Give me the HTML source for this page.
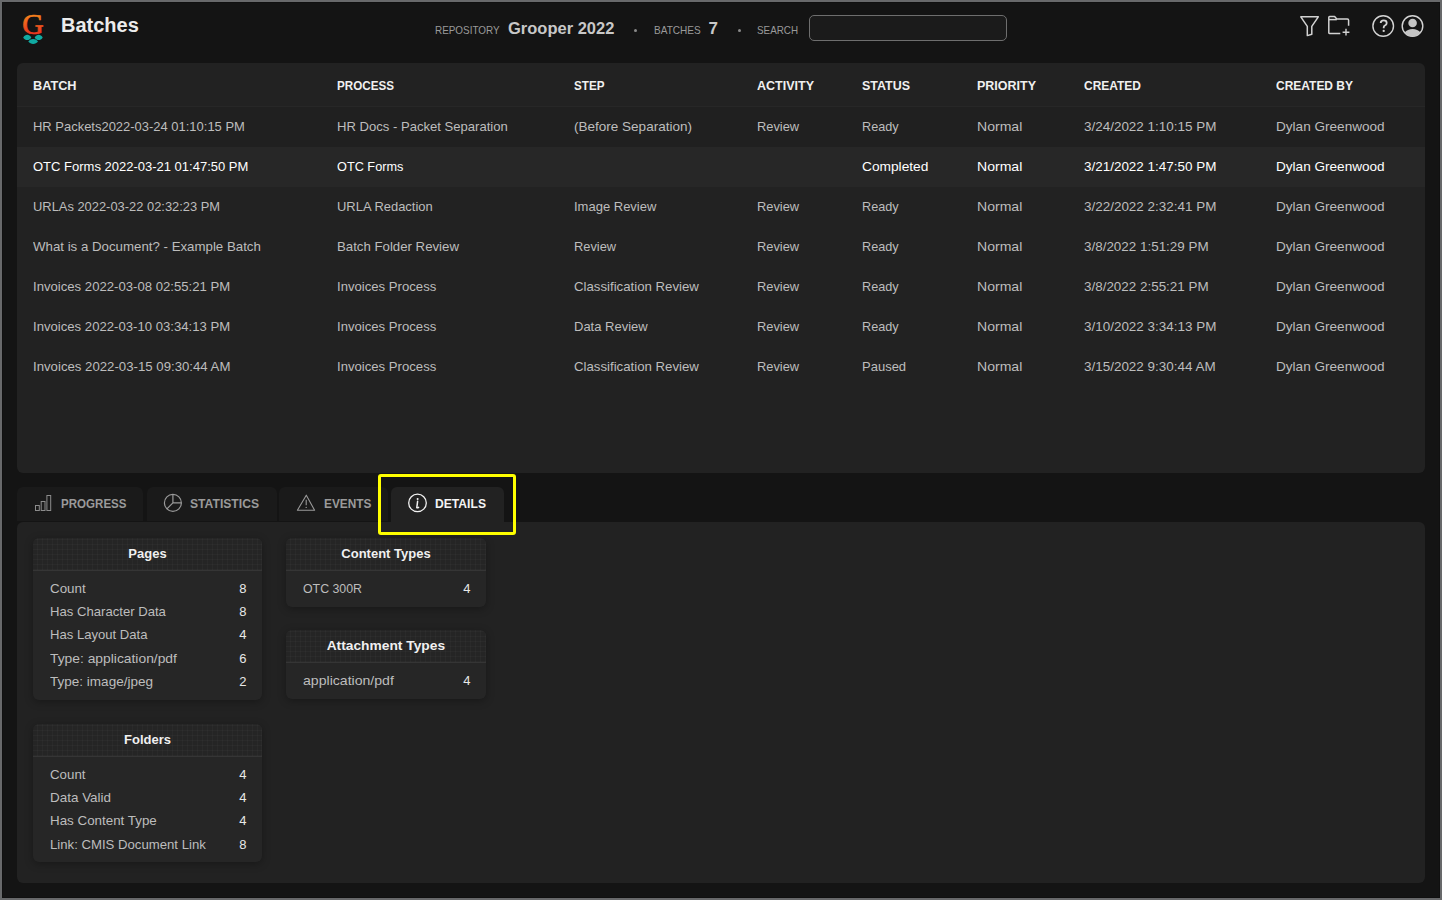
<!DOCTYPE html><html><head><meta charset="utf-8"><style>*{box-sizing:border-box;margin:0;padding:0}
html,body{width:1442px;height:900px;overflow:hidden;background:#141414;font-family:"Liberation Sans",sans-serif}
#frame{position:absolute;left:0;top:0;width:1442px;height:900px;border:2px solid #68696b;background:#141414;box-shadow:inset 0 0 0 1px #101010}
.abs{position:absolute;white-space:nowrap}
#title{left:61px;top:13.8px;font-size:19.5px;line-height:22px;font-weight:bold;color:#ececec;transform:scaleX(1.025);transform-origin:0 0}
.lbl{font-size:11px;line-height:13px;color:#9a9a9a;top:24px}
.val{font-size:17px;line-height:20px;font-weight:bold;color:#c8c8c8;top:18.6px}
.dot{width:3px;height:3px;border-radius:50%;background:#8a8a8a;top:29px}
#search{left:809px;top:15px;width:198px;height:26px;border:1px solid #6e6e6e;border-radius:5px;background:#1b1b1b}
#panel{left:17px;top:63px;width:1408px;height:410px;background:#222222;border-radius:6px}
.th{font-size:13px;line-height:15px;font-weight:bold;color:#f0f0f0;top:78px}
.hline{left:17px;top:106px;width:1408px;height:1px;background:#272727}
.row{left:17px;width:1408px;height:40px}
.r1{background:#202020}
.sel{background:#272727}
.td{font-size:13px;line-height:15px;color:#bdbdbd}
.tds{color:#ffffff}
.tab{top:487px;height:35px;background:#1a1a1a;border-radius:6px 6px 0 0}
.tabt{font-size:13px;line-height:15px;font-weight:bold;color:#9a9a9a;top:496px}
#lower{left:17px;top:522px;width:1408px;height:361px;background:#222222;border-radius:6px}
.card{position:absolute;background:#262626;border-radius:6px;box-shadow:0 2px 8px rgba(0,0,0,.3)}
.chead{position:absolute;left:0;top:0;width:100%;height:33px;border-radius:6px 6px 0 0;border-bottom:1px solid #353535;
 background-color:#252525;background-position:-1px 0;
 background-image:repeating-linear-gradient(90deg,rgba(255,255,255,.025) 0 1px,transparent 1px 5px),repeating-linear-gradient(0deg,rgba(255,255,255,.025) 0 1px,transparent 1px 5px);
 text-align:center;font-size:13px;font-weight:bold;color:#f0f0f0;line-height:32px}
.ci{position:absolute;font-size:13px;line-height:15px;color:#bdbdbd;white-space:nowrap}
.cv{position:absolute;font-size:13px;line-height:15px;color:#e8e8e8;text-align:right;white-space:nowrap}
#yel{left:378px;top:474px;width:138px;height:61px;border:3px solid #ffff00;border-radius:3px}
.act{background:#222222}
.tact{color:#f4f4f4}
</style></head><body><div id="frame"></div>
<svg class="abs" style="left:18px;top:10px" width="32" height="38" viewBox="0 0 32 38">
 <defs><linearGradient id="gg" x1="0" y1="0" x2="0" y2="1"><stop offset="0.1" stop-color="#f7951c"/><stop offset="0.95" stop-color="#e6221f"/></linearGradient></defs>
 <text x="15" y="24" text-anchor="middle" font-family="Liberation Serif" font-size="28" fill="url(#gg)" stroke="url(#gg)" stroke-width="0.7" transform="translate(-0.9,-1.8) scale(1.06,1.06)">G</text>
 <path d="M5.2 27.4C7.2 23.8 11.3 23.8 13.3 27.4C11.3 31 7.2 31 5.2 27.4Z" fill="#10aaa2"/>
 <path d="M16.7 27.4C18.7 23.8 22.7 23.8 24.7 27.4C22.7 31 18.7 31 16.7 27.4Z" fill="#10aaa2"/>
 <path d="M10.3 31.5C12.5 28.2 17.8 28.2 20 31.5C17.8 34.8 12.5 34.8 10.3 31.5Z" fill="#10aaa2"/>
</svg>
<div id="title" class="abs">Batches</div>
<div class="abs lbl" style="left:435px;transform:scaleX(0.9);transform-origin:0 0">REPOSITORY</div>
<div class="abs val" style="left:507.5px;transform:scaleX(0.97);transform-origin:0 0">Grooper 2022</div>
<div class="abs dot" style="left:633.5px"></div>
<div class="abs lbl" style="left:653.5px;transform:scaleX(0.915);transform-origin:0 0">BATCHES</div>
<div class="abs val" style="left:708.5px;transform:scaleX(1);transform-origin:0 0">7</div>
<div class="abs dot" style="left:737.5px"></div>
<div class="abs lbl" style="left:757px;transform:scaleX(0.895);transform-origin:0 0">SEARCH</div>
<div id="search" class="abs"></div>
<div id="panel" class="abs"></div><div class="abs hline"></div><div class="abs th" style="left:33px;transform:scaleX(0.9769);transform-origin:0 0;">BATCH</div><div class="abs th" style="left:337px;transform:scaleX(0.8965);transform-origin:0 0;">PROCESS</div><div class="abs th" style="left:574px;transform:scaleX(0.8979);transform-origin:0 0;">STEP</div><div class="abs th" style="left:757px;transform:scaleX(0.9624);transform-origin:0 0;">ACTIVITY</div><div class="abs th" style="left:862px;transform:scaleX(0.9585);transform-origin:0 0;">STATUS</div><div class="abs th" style="left:977px;transform:scaleX(0.9608);transform-origin:0 0;">PRIORITY</div><div class="abs th" style="left:1084px;transform:scaleX(0.9211);transform-origin:0 0;">CREATED</div><div class="abs th" style="left:1276px;transform:scaleX(0.9216);transform-origin:0 0;">CREATED BY</div><div class="abs row r1" style="top:107px"></div><div class="abs td" style="left:33px;top:119px;transform:scaleX(0.9972);transform-origin:0 0">HR Packets2022-03-24 01:10:15 PM</div><div class="abs td" style="left:337px;top:119px;transform:scaleX(1.0059);transform-origin:0 0">HR Docs - Packet Separation</div><div class="abs td" style="left:574px;top:119px;transform:scaleX(1.0398);transform-origin:0 0">(Before Separation)</div><div class="abs td" style="left:757px;top:119px;transform:scaleX(0.9884);transform-origin:0 0">Review</div><div class="abs td" style="left:862px;top:119px;transform:scaleX(0.9737);transform-origin:0 0">Ready</div><div class="abs td" style="left:977px;top:119px;transform:scaleX(1.081);transform-origin:0 0">Normal</div><div class="abs td" style="left:1084px;top:119px;transform:scaleX(1.0346);transform-origin:0 0">3/24/2022 1:10:15 PM</div><div class="abs td" style="left:1276px;top:119px;transform:scaleX(1.0442);transform-origin:0 0">Dylan Greenwood</div><div class="abs row sel" style="top:147px"></div><div class="abs td tds" style="left:33px;top:159px;transform:scaleX(1.0);transform-origin:0 0">OTC Forms 2022-03-21 01:47:50 PM</div><div class="abs td tds" style="left:337px;top:159px;transform:scaleX(0.9779);transform-origin:0 0">OTC Forms</div><div class="abs td tds" style="left:862px;top:159px;transform:scaleX(1.0556);transform-origin:0 0">Completed</div><div class="abs td tds" style="left:977px;top:159px;transform:scaleX(1.081);transform-origin:0 0">Normal</div><div class="abs td tds" style="left:1084px;top:159px;transform:scaleX(1.0346);transform-origin:0 0">3/21/2022 1:47:50 PM</div><div class="abs td tds" style="left:1276px;top:159px;transform:scaleX(1.0442);transform-origin:0 0">Dylan Greenwood</div><div class="abs row" style="top:187px"></div><div class="abs td" style="left:33px;top:199px;transform:scaleX(0.992);transform-origin:0 0">URLAs 2022-03-22 02:32:23 PM</div><div class="abs td" style="left:337px;top:199px;transform:scaleX(0.9958);transform-origin:0 0">URLA Redaction</div><div class="abs td" style="left:574px;top:199px;transform:scaleX(1.0);transform-origin:0 0">Image Review</div><div class="abs td" style="left:757px;top:199px;transform:scaleX(0.9884);transform-origin:0 0">Review</div><div class="abs td" style="left:862px;top:199px;transform:scaleX(0.9737);transform-origin:0 0">Ready</div><div class="abs td" style="left:977px;top:199px;transform:scaleX(1.081);transform-origin:0 0">Normal</div><div class="abs td" style="left:1084px;top:199px;transform:scaleX(1.0346);transform-origin:0 0">3/22/2022 2:32:41 PM</div><div class="abs td" style="left:1276px;top:199px;transform:scaleX(1.0442);transform-origin:0 0">Dylan Greenwood</div><div class="abs row" style="top:227px"></div><div class="abs td" style="left:33px;top:239px;transform:scaleX(1.0206);transform-origin:0 0">What is a Document? - Example Batch</div><div class="abs td" style="left:337px;top:239px;transform:scaleX(1.0167);transform-origin:0 0">Batch Folder Review</div><div class="abs td" style="left:574px;top:239px;transform:scaleX(0.9884);transform-origin:0 0">Review</div><div class="abs td" style="left:757px;top:239px;transform:scaleX(0.9884);transform-origin:0 0">Review</div><div class="abs td" style="left:862px;top:239px;transform:scaleX(0.9737);transform-origin:0 0">Ready</div><div class="abs td" style="left:977px;top:239px;transform:scaleX(1.081);transform-origin:0 0">Normal</div><div class="abs td" style="left:1084px;top:239px;transform:scaleX(1.0325);transform-origin:0 0">3/8/2022 1:51:29 PM</div><div class="abs td" style="left:1276px;top:239px;transform:scaleX(1.0442);transform-origin:0 0">Dylan Greenwood</div><div class="abs row" style="top:267px"></div><div class="abs td" style="left:33px;top:279px;transform:scaleX(1.0103);transform-origin:0 0">Invoices 2022-03-08 02:55:21 PM</div><div class="abs td" style="left:337px;top:279px;transform:scaleX(1.0103);transform-origin:0 0">Invoices Process</div><div class="abs td" style="left:574px;top:279px;transform:scaleX(1.0163);transform-origin:0 0">Classification Review</div><div class="abs td" style="left:757px;top:279px;transform:scaleX(0.9884);transform-origin:0 0">Review</div><div class="abs td" style="left:862px;top:279px;transform:scaleX(0.9737);transform-origin:0 0">Ready</div><div class="abs td" style="left:977px;top:279px;transform:scaleX(1.081);transform-origin:0 0">Normal</div><div class="abs td" style="left:1084px;top:279px;transform:scaleX(1.0325);transform-origin:0 0">3/8/2022 2:55:21 PM</div><div class="abs td" style="left:1276px;top:279px;transform:scaleX(1.0442);transform-origin:0 0">Dylan Greenwood</div><div class="abs row" style="top:307px"></div><div class="abs td" style="left:33px;top:319px;transform:scaleX(1.0103);transform-origin:0 0">Invoices 2022-03-10 03:34:13 PM</div><div class="abs td" style="left:337px;top:319px;transform:scaleX(1.0103);transform-origin:0 0">Invoices Process</div><div class="abs td" style="left:574px;top:319px;transform:scaleX(1.0);transform-origin:0 0">Data Review</div><div class="abs td" style="left:757px;top:319px;transform:scaleX(0.9884);transform-origin:0 0">Review</div><div class="abs td" style="left:862px;top:319px;transform:scaleX(0.9737);transform-origin:0 0">Ready</div><div class="abs td" style="left:977px;top:319px;transform:scaleX(1.081);transform-origin:0 0">Normal</div><div class="abs td" style="left:1084px;top:319px;transform:scaleX(1.0346);transform-origin:0 0">3/10/2022 3:34:13 PM</div><div class="abs td" style="left:1276px;top:319px;transform:scaleX(1.0442);transform-origin:0 0">Dylan Greenwood</div><div class="abs row" style="top:347px"></div><div class="abs td" style="left:33px;top:359px;transform:scaleX(1.0155);transform-origin:0 0">Invoices 2022-03-15 09:30:44 AM</div><div class="abs td" style="left:337px;top:359px;transform:scaleX(1.0103);transform-origin:0 0">Invoices Process</div><div class="abs td" style="left:574px;top:359px;transform:scaleX(1.0163);transform-origin:0 0">Classification Review</div><div class="abs td" style="left:757px;top:359px;transform:scaleX(0.9884);transform-origin:0 0">Review</div><div class="abs td" style="left:862px;top:359px;transform:scaleX(1.0);transform-origin:0 0">Paused</div><div class="abs td" style="left:977px;top:359px;transform:scaleX(1.081);transform-origin:0 0">Normal</div><div class="abs td" style="left:1084px;top:359px;transform:scaleX(1.0346);transform-origin:0 0">3/15/2022 9:30:44 AM</div><div class="abs td" style="left:1276px;top:359px;transform:scaleX(1.0442);transform-origin:0 0">Dylan Greenwood</div><div class="abs tab" style="left:17px;width:126px;height:34px"></div>
<div class="abs tab" style="left:147px;width:130px;height:34px"></div>
<div class="abs tab" style="left:279px;width:109px;height:34px"></div>
<div class="abs tab act" style="left:391px;width:113px"></div>
<div id="lower" class="abs"></div>
<div class="abs tabt" style="left:60.5px;transform:scaleX(0.889);transform-origin:0 0">PROGRESS</div>
<div class="abs tabt" style="left:190px;transform:scaleX(0.934);transform-origin:0 0">STATISTICS</div>
<div class="abs tabt" style="left:323.5px;transform:scaleX(0.911);transform-origin:0 0">EVENTS</div>
<div class="abs tabt tact" style="left:435px;transform:scaleX(0.933);transform-origin:0 0">DETAILS</div>
<svg class="abs" style="left:30px;top:490px" width="30" height="25" viewBox="0 0 30 25" fill="none" stroke="#8c8c8c" stroke-width="1">
<rect x="5.5" y="15.5" width="3.8" height="5"/><rect x="11.2" y="11.5" width="3.8" height="9"/><rect x="16.9" y="5.5" width="3.8" height="15"/></svg>
<svg class="abs" style="left:160px;top:490px" width="30" height="25" viewBox="0 0 30 25" fill="none" stroke="#9a9a9a" stroke-width="1.2">
<circle cx="12.9" cy="12.9" r="8.5"/><path d="M12.9 4.4V12.9H21.4M12.9 12.9L6.9 18.9"/></svg>
<svg class="abs" style="left:292px;top:490px" width="30" height="25" viewBox="0 0 30 25" fill="none" stroke="#9a9a9a" stroke-width="1.1">
<path d="M14.3 5.2L22.6 20.2H5.4Z" stroke-linejoin="round"/><path d="M14.2 9.8V15.3"/><circle cx="14.2" cy="17.4" r="0.7" fill="#9a9a9a" stroke="none"/></svg>
<svg class="abs" style="left:402px;top:490px" width="30" height="25" viewBox="0 0 30 25" fill="none" stroke="#f2f2f2" stroke-width="1.3">
<circle cx="15.5" cy="12.9" r="8.8"/><circle cx="15.6" cy="9.1" r="1" fill="#f2f2f2" stroke="none"/><path d="M15.6 11.3L14.8 17.6Q15.4 18.1 16.6 17.4" stroke-width="1.5" stroke-linecap="round"/></svg>
<div class="card" style="left:33px;top:538px;width:229px;height:161.7px"><div class="chead"><span style="display:inline-block;transform:scaleX(1)">Pages</span></div><div class="ci" style="left:16.5px;top:42.7px;transform:scaleX(1.0286);transform-origin:0 0">Count</div><div class="cv" style="right:15.5px;top:42.7px">8</div><div class="ci" style="left:16.5px;top:66.0px;transform:scaleX(1.0087);transform-origin:0 0">Has Character Data</div><div class="cv" style="right:15.5px;top:66.0px">8</div><div class="ci" style="left:16.5px;top:89.3px;transform:scaleX(1.0072);transform-origin:0 0">Has Layout Data</div><div class="cv" style="right:15.5px;top:89.3px">4</div><div class="ci" style="left:16.5px;top:112.6px;transform:scaleX(1.0642);transform-origin:0 0">Type: application/pdf</div><div class="cv" style="right:15.5px;top:112.6px">6</div><div class="ci" style="left:16.5px;top:135.9px;transform:scaleX(1.0404);transform-origin:0 0">Type: image/jpeg</div><div class="cv" style="right:15.5px;top:135.9px">2</div></div>
<div class="card" style="left:33px;top:724px;width:229px;height:138.4px"><div class="chead"><span style="display:inline-block;transform:scaleX(1)">Folders</span></div><div class="ci" style="left:16.5px;top:42.7px;transform:scaleX(1.0229);transform-origin:0 0">Count</div><div class="cv" style="right:15.5px;top:42.7px">4</div><div class="ci" style="left:16.5px;top:66.0px;transform:scaleX(1.0345);transform-origin:0 0">Data Valid</div><div class="cv" style="right:15.5px;top:66.0px">4</div><div class="ci" style="left:16.5px;top:89.3px;transform:scaleX(1.0282);transform-origin:0 0">Has Content Type</div><div class="cv" style="right:15.5px;top:89.3px">4</div><div class="ci" style="left:16.5px;top:112.6px;transform:scaleX(1.0123);transform-origin:0 0">Link: CMIS Document Link</div><div class="cv" style="right:15.5px;top:112.6px">8</div></div>
<div class="card" style="left:286px;top:538px;width:200px;height:68.5px"><div class="chead"><span style="display:inline-block;transform:scaleX(1)">Content Types</span></div><div class="ci" style="left:16.5px;top:42.7px;transform:scaleX(0.9495);transform-origin:0 0">OTC 300R</div><div class="cv" style="right:15.5px;top:42.7px">4</div></div>
<div class="card" style="left:286px;top:630px;width:200px;height:68.5px"><div class="chead"><span style="display:inline-block;transform:scaleX(1.06)">Attachment Types</span></div><div class="ci" style="left:16.5px;top:42.7px;transform:scaleX(1.0836);transform-origin:0 0">application/pdf</div><div class="cv" style="right:15.5px;top:42.7px">4</div></div>
<div id="yel" class="abs"></div>
<svg class="abs" style="left:1295px;top:10px" width="60" height="30" viewBox="0 0 60 30" fill="none" stroke="#d2d2d2" stroke-width="1.5" stroke-linejoin="round">
<path d="M5.8 6.8H23.3L16.8 16.3V24.3L12.3 25.6V16.3Z"/>
<path d="M45.3 23.4H34.4Q33.8 23.4 33.8 22.8V7.4Q33.8 6.6 34.6 6.6H39.6L41.8 9.1H52.4Q53.6 9.1 53.6 10.3V15.8"/>
<path d="M34 9.6H41.8"/>
<path d="M51 18.8V25.6M47.6 22.2H54.4" stroke-width="1.4"/></svg>
<svg class="abs" style="left:1365px;top:10px" width="65" height="30" viewBox="0 0 65 30" fill="none" stroke="#d4d4d4" stroke-width="1.4">
<circle cx="18.2" cy="16" r="10.3"/>
<path d="M15.7 13Q15.7 10.4 18.7 10.4Q21.7 10.4 21.7 12.9Q21.7 14.6 19.9 15.5Q18.7 16.1 18.7 17.4V18.2" stroke-width="1.8"/>
<circle cx="18.7" cy="20.9" r="1.15" fill="#d2d2d2" stroke="none"/>
<circle cx="47.5" cy="16" r="10.3"/>
<circle cx="47.6" cy="13" r="4.3" fill="#c4c4c4" stroke="none"/>
<path d="M39.6 22.6Q42.5 19 47.6 19Q52.7 19 55.5 22.6Q52.6 26.5 47.5 26.5Q42.4 26.5 39.6 22.6Z" fill="#c4c4c4" stroke="none"/>
</svg></body></html>
